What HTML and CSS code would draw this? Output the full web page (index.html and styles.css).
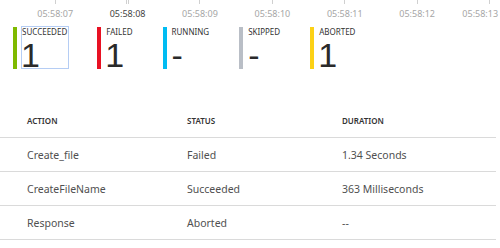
FILE: index.html
```html
<!DOCTYPE html>
<html>
<head>
    <title>Run details</title>
    <link rel="stylesheet" href="styles.css">
</head>
<body>
    <div class="axis">
        <div class="tick">05:58:07</div>
        <div class="tick current">05:58:08</div>
        <div class="tick">05:58:09</div>
        <div class="tick">05:58:10</div>
        <div class="tick">05:58:11</div>
        <div class="tick">05:58:12</div>
        <div class="tick last">05:58:13</div>
    </div>

    <div class="statuses">
        <div class="stat">
            <span class="bar succeeded"></span>
            <div class="stat-body focused">
                <div class="stat-label">Succeeded</div>
                <div class="stat-count">1</div>
            </div>
        </div>
        <div class="stat">
            <span class="bar failed"></span>
            <div class="stat-body">
                <div class="stat-label">Failed</div>
                <div class="stat-count">1</div>
            </div>
        </div>
        <div class="stat">
            <span class="bar running"></span>
            <div class="stat-body">
                <div class="stat-label">Running</div>
                <div class="stat-count dash">-</div>
            </div>
        </div>
        <div class="stat">
            <span class="bar skipped"></span>
            <div class="stat-body">
                <div class="stat-label">Skipped</div>
                <div class="stat-count dash">-</div>
            </div>
        </div>
        <div class="stat">
            <span class="bar aborted"></span>
            <div class="stat-body">
                <div class="stat-label">Aborted</div>
                <div class="stat-count">1</div>
            </div>
        </div>
    </div>

    <div class="actions">
        <div class="row head">
            <div>Action</div>
            <div>Status</div>
            <div>Duration</div>
        </div>
        <div class="row">
            <div>Create_file</div>
            <div>Failed</div>
            <div>1.34 Seconds</div>
        </div>
        <div class="row">
            <div>CreateFileName</div>
            <div>Succeeded</div>
            <div>363 Milliseconds</div>
        </div>
        <div class="row">
            <div>Response</div>
            <div>Aborted</div>
            <div>--</div>
        </div>
    </div>
</body>
</html>
```

FILE: styles.css
```css
body {
    margin: 0;
    font-family: "Noto Sans", "Open Sans", sans-serif;
    color: #333;
    background: #fff;
}

/* time axis */
.axis {
    display: flex;
    padding-left: 19px;
    height: 24px;
}

.tick {
    width: 72.4px;
    flex: none;
    text-align: center;
    font-size: 9px;
    line-height: 12px;
    color: #a6a6a6;
}

.tick::before {
    content: "";
    display: block;
    width: 1px;
    height: 4px;
    margin: 0 auto 4px;
    background: #d0d0d0;
}

.tick.current {
    color: #444;
}

.tick.current::before {
    width: 1px;
    border-left: 1px solid #d0d0d0;
    border-right: 1px solid #d0d0d0;
    background: none;
}

.tick.last {
    width: auto;
    text-align: left;
    padding-left: 9px;
}

.tick.last::before {
    margin-left: 27px;
}

/* status counters */
.statuses {
    display: flex;
    padding-left: 13px;
    margin-top: 2px;
}

.stat {
    display: flex;
    gap: 4px;
    margin-right: 28px;
}

.bar {
    width: 4px;
    height: 42px;
    margin-top: 1px;
}

.bar.succeeded { background: #7fba00; }
.bar.failed { background: #e81123; }
.bar.running { background: #00bcf2; }
.bar.skipped { background: #b9bec6; }
.bar.aborted { background: #fcd116; }

.stat-body {
    border: 1px solid transparent;
    padding: 0 1px 0 0;
    height: 41px;
}

.stat-body.focused {
    border-color: #b5cdf4;
}

.stat-label {
    font-size: 8px;
    text-transform: uppercase;
    color: #333;
    margin-top: -1px;
}

.stat-count {
    font-family: "Liberation Sans", Arial, sans-serif;
    font-size: 34px;
    color: #2a2a2a;
    margin-left: -1px;
    margin-top: -1px;
}

.stat-count.dash {
    margin-left: 0;
}

/* actions table */
.actions {
    width: 496px;
    margin-top: 35px;
}

.row {
    display: grid;
    grid-template-columns: 160px 155px 1fr;
    padding-left: 27px;
    height: 33px;
    align-items: center;
    border-bottom: 1px solid #dadada;
    font-size: 10.5px;
    color: #505050;
}

.row.head {
    font-size: 8px;
    font-weight: 600;
    text-transform: uppercase;
    color: #333;
}
```
